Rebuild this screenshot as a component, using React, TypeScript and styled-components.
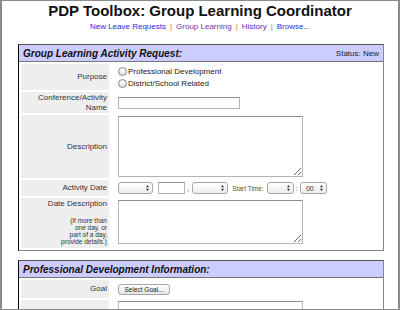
import React from "react";
import styled, { createGlobalStyle } from "styled-components";

const Global = createGlobalStyle`
	html, body {
		margin: 0;
		padding: 0;
		background: #fff;
	}
`;

const Frame = styled.div`
	box-sizing: border-box;
	width: 400px;
	height: 310px;
	overflow: hidden;
	background: #fff;
	border: 1px solid #8c8c8c;
	border-left-width: 2px;
	border-right-width: 2px;
	font-family: "Liberation Sans", Arial, sans-serif;
	color: #333;
`;

const Title = styled.h1`
	margin: 0;
	padding-top: 1px;
	font-size: 15px;
	line-height: 17px;
	font-weight: bold;
	text-align: center;
	color: #111;
`;

const Nav = styled.div`
	margin-top: 3px;
	font-size: 8px;
	line-height: 10px;
	text-align: center;
`;

const NavLink = styled.a<{ $color: string }>`
	color: ${(p) => p.$color};
	text-decoration: none;
`;

const NavSep = styled.span`
	color: #998833;
	margin: 0 4px;
`;

const Panel = styled.div<{ $mt: number }>`
	margin: ${(p) => p.$mt}px 14px 0 16px;
	border-top: 1px solid #555;
	border-left: 1px solid #000;
	border-right: 1px solid #888;
	border-bottom: 1px solid #888;
`;

const PanelHead = styled.div`
	display: flex;
	align-items: center;
	justify-content: space-between;
	height: 16px;
	padding: 0 4px;
	background: #ccccff;
	border-bottom: 1px solid #777;
`;

const PanelTitle = styled.span`
	font-size: 10px;
	font-weight: bold;
	font-style: italic;
	color: #111;
`;

const Status = styled.span`
	font-size: 8px;
	color: #222;
`;

const Rows = styled.div`
	display: grid;
	grid-template-columns: 88px 1fr;
	gap: 2px;
	padding: 2px;
`;

const Label = styled.div<{ $h: number; $top?: boolean }>`
	height: ${(p) => p.$h}px;
	background: #eeeeee;
	font-size: 8px;
	line-height: 10px;
	text-align: right;
	padding-right: 2px;
	display: flex;
	flex-direction: column;
	justify-content: ${(p) => (p.$top ? "flex-start" : "center")};
	padding-top: ${(p) => (p.$top ? 1 : 0)}px;
	box-sizing: border-box;
`;

const Note = styled.div`
	margin-top: 8px;
	font-size: 6.5px;
	line-height: 7px;
`;

const Field = styled.div<{ $h: number; $top?: boolean }>`
	height: ${(p) => p.$h}px;
	padding-left: 7px;
	display: flex;
	flex-direction: ${(p) => (p.$top ? "column" : "row")};
	align-items: ${(p) => (p.$top ? "flex-start" : "center")};
	justify-content: ${(p) => (p.$top ? "center" : "flex-start")};
	box-sizing: border-box;
	font-size: 8px;
`;

const RadioLine = styled.label`
	display: flex;
	align-items: center;
	height: 12px;
	font-size: 8px;
	color: #222;
`;

const Radio = styled.input.attrs({ type: "radio" })`
	appearance: none;
	box-sizing: border-box;
	width: 9px;
	height: 9px;
	margin: 0 1px 0 0;
	border: 1px solid #8a8a8a;
	border-radius: 50%;
	background: radial-gradient(circle at 50% 35%, #ffffff 0%, #e2e2e2 70%, #cfcfcf 100%);
`;

const TextInput = styled.input.attrs({ type: "text" })<{ $w: number }>`
	box-sizing: border-box;
	width: ${(p) => p.$w}px;
	height: 12px;
	margin: 0;
	padding: 0 2px;
	border: 1px solid #b4b4b4;
	border-top-color: #8f8f8f;
	font-size: 8px;
	background: #fff;
`;

const TextArea = styled.textarea<{ $h: number; $mt?: number }>`
	box-sizing: border-box;
	width: 185px;
	height: ${(p) => p.$h}px;
	margin: ${(p) => p.$mt || 0}px 0 0 0;
	padding: 2px;
	border: 1px solid #b4b4b4;
	border-top-color: #8f8f8f;
	font-size: 8px;
	background: #fff;
`;

const Select = styled.div<{ $w: number }>`
	box-sizing: border-box;
	width: ${(p) => p.$w}px;
	height: 12px;
	display: flex;
	align-items: center;
	justify-content: space-between;
	padding: 0 3px 0 5px;
	border: 1px solid #a6a6a6;
	border-radius: 3px;
	background: linear-gradient(#ffffff, #ececec);
	font-size: 7px;
	color: #333;
`;

const Gap = styled.span<{ $l: number; $r: number }>`
	margin: 0 ${(p) => p.$r}px 0 ${(p) => p.$l}px;
	font-size: 8px;
	color: #333;
`;

const SmallText = styled.span`
	font-size: 6.5px;
	color: #555533;
	margin: 0 3px 0 4px;
`;

const Button = styled.button`
	box-sizing: border-box;
	width: 52px;
	height: 11px;
	margin: 0;
	padding: 0;
	border: 1px solid #a6a6a6;
	border-radius: 3px;
	background: linear-gradient(#ffffff, #e6e6e6);
	font-family: "Liberation Sans", Arial, sans-serif;
	font-size: 6.5px;
	line-height: 9px;
	color: #222;
`;

const Arrows = () => (
	<svg width="3" height="6" viewBox="0 0 3 6">
		<path d="M1.5 0 L3 2.2 L0 2.2 Z M1.5 6 L3 3.8 L0 3.8 Z" fill="#333" />
	</svg>
);

const Sel = ({ w, value = "" }: { w: number; value?: string }) => (
	<Select $w={w}>
		<span>{value}</span>
		<Arrows />
	</Select>
);

export default function App() {
	return (
		<>
			<Global />
			<Frame>
				<Title>PDP Toolbox: Group Learning Coordinator</Title>
				<Nav>
					<NavLink $color="#2a2ae0" href="#">New Leave Requests</NavLink>
					<NavSep>|</NavSep>
					<NavLink $color="#7733aa" href="#">Group Learning</NavLink>
					<NavSep>|</NavSep>
					<NavLink $color="#5528cc" href="#">History</NavLink>
					<NavSep>|</NavSep>
					<NavLink $color="#2a2ae0" href="#">Browse...</NavLink>
				</Nav>

				<Panel $mt={12}>
					<PanelHead>
						<PanelTitle>Group Learning Activity Request:</PanelTitle>
						<Status>Status: New</Status>
					</PanelHead>
					<Rows>
						<Label $h={26}>Purpose</Label>
						<Field $h={26} $top>
							<RadioLine>
								<Radio name="purpose" />
								Professional Development
							</RadioLine>
							<RadioLine>
								<Radio name="purpose" />
								District/School Related
							</RadioLine>
						</Field>

						<Label $h={21}>
							<div>Conference/Activity</div>
							<div>Name</div>
						</Label>
						<Field $h={21}>
							<TextInput $w={122} />
						</Field>

						<Label $h={63}>Description</Label>
						<Field $h={63}>
							<TextArea $h={61} />
						</Field>

						<Label $h={16}>Activity Date</Label>
						<Field $h={16}>
							<Sel w={35} />
							<Gap $l={5} $r={0} />
							<TextInput $w={27} />
							<Gap $l={2} $r={3}>,</Gap>
							<Sel w={36} />
							<SmallText>Start Time:</SmallText>
							<Sel w={27} />
							<Gap $l={2} $r={2}>:</Gap>
							<Sel w={27} value="00" />
						</Field>

						<Label $h={50} $top>
							<div>Date Description</div>
							<Note>
								<div>(If more than</div>
								<div>one day, or</div>
								<div>part of a day,</div>
								<div>provide details.)</div>
							</Note>
						</Label>
						<Field $h={50} $top style={{ justifyContent: "flex-start" }}>
							<TextArea $h={44} $mt={2} />
						</Field>
					</Rows>
				</Panel>

				<Panel $mt={9}>
					<PanelHead>
						<PanelTitle>Professional Development Information:</PanelTitle>
					</PanelHead>
					<Rows>
						<Label $h={18}>Goal</Label>
						<Field $h={18}>
							<Button>Select Goal...</Button>
						</Field>

						<Label $h={40} />
						<Field $h={40} $top style={{ justifyContent: "flex-start" }}>
							<TextArea $h={40} $mt={1} />
						</Field>
					</Rows>
				</Panel>
			</Frame>
		</>
	);
}
